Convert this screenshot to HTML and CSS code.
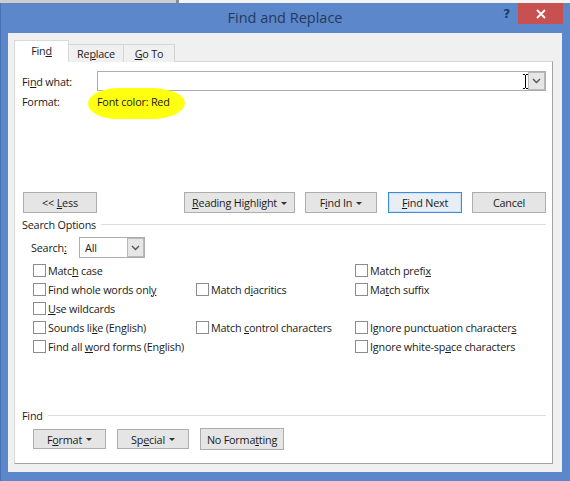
FILE: index.html
```html
<!DOCTYPE html>
<html>
<head>
<meta charset="utf-8">
<link rel="stylesheet" href="styles.css">
</head>
<body>
<div class="topstrip"><div class="ts-left"></div><div class="ts-mark"></div><div class="ts-right"></div></div>
<div class="window">
  <div class="titlebar">
    <div></div>
    <div class="title">Find and Replace</div>
    <div class="controls">
      <span class="help">?</span>
      <div class="close"><svg width="10" height="10" viewBox="0 0 10 10"><path d="M1 1 L9 9 M9 1 L1 9" stroke="#fff" stroke-width="1.8"/></svg></div>
    </div>
  </div>
  <div class="client">
    <div class="tabs">
      <div class="tab tab-active"><span>Fin<u>d</u></span></div>
      <div class="tab tab-replace"><span>Re<u>p</u>lace</span></div>
      <div class="tab tab-goto"><span><u>G</u>o To</span></div>
    </div>
    <div class="panel">
      <div class="row-find">
        <div class="lbl">Fi<u>n</u>d what:</div>
        <div class="combo">
          <div class="combo-text"><svg class="ibeam" width="5" height="15" viewBox="0 0 5 15"><path d="M0 0.5 H2 M3 0.5 H5 M2.5 1 V14 M0 14.5 H2 M3 14.5 H5" stroke="#000" stroke-width="1"/></svg></div>
          <div class="combo-btn"><svg width="9" height="6" viewBox="0 0 9 6"><path d="M1 1 L4.5 4.5 L8 1" fill="none" stroke="#555" stroke-width="1.4"/></svg></div>
        </div>
      </div>
      <div class="row-format">
        <div class="lbl">Format:</div>
        <div class="hl"><span class="hl-text">Font color: Red</span></div>
      </div>
      <div class="btn-row">
        <div class="btn btn-less"><span>&lt;&lt; <u>L</u>ess</span></div>
        <div class="btn btn-rh"><span><u>R</u>eading Highlight</span><span class="caret"></span></div>
        <div class="btn btn-findin"><span>F<u>i</u>nd In</span><span class="caret"></span></div>
        <div class="btn btn-next"><span><u>F</u>ind Next</span></div>
        <div class="btn btn-cancel"><span>Cancel</span></div>
      </div>
      <div class="group-head"><span>Search Options</span><div class="group-line"></div></div>
      <div class="search-row">
        <div class="search-lbl">Search<u>:</u></div>
        <div class="select">
          <div class="select-text">All</div>
          <div class="select-btn"><svg width="9" height="6" viewBox="0 0 9 6"><path d="M1 1 L4.5 4.5 L8 1" fill="none" stroke="#555" stroke-width="1.4"/></svg></div>
        </div>
      </div>
      <div class="checks">
        <label class="chk"><span class="box"></span><span>Matc<u>h</u> case</span></label>
        <div></div>
        <label class="chk"><span class="box"></span><span>Match prefi<u>x</u></span></label>

        <label class="chk"><span class="box"></span><span>Find whole words onl<u>y</u></span></label>
        <label class="chk"><span class="box"></span><span>Match d<u>i</u>acritics</span></label>
        <label class="chk"><span class="box"></span><span>Ma<u>t</u>ch suffix</span></label>

        <label class="chk"><span class="box"></span><span><u>U</u>se wildcards</span></label>
        <div></div>
        <div></div>

        <label class="chk"><span class="box"></span><span>Sounds li<u>k</u>e (English)</span></label>
        <label class="chk"><span class="box"></span><span>Match <u>c</u>ontrol characters</span></label>
        <label class="chk"><span class="box"></span><span>Ignore punctuation character<u>s</u></span></label>

        <label class="chk"><span class="box"></span><span>Find all <u>w</u>ord forms (English)</span></label>
        <div></div>
        <label class="chk"><span class="box"></span><span>Ignore white-sp<u>a</u>ce characters</span></label>
      </div>
      <div class="group-head group-find"><span>Find</span><div class="group-line"></div></div>
      <div class="bottom-row">
        <div class="btn btn-format"><span>F<u>o</u>rmat</span><span class="caret"></span></div>
        <div class="btn btn-special"><span>Sp<u>e</u>cial</span><span class="caret"></span></div>
        <div class="btn btn-noformat"><span>No Forma<u>t</u>ting</span></div>
      </div>
    </div>
  </div>
</div>
</body>
</html>
```
FILE: styles.css
```css
* { box-sizing: border-box; }
html, body { margin: 0; padding: 0; }
body {
  width: 570px;
  height: 481px;
  overflow: hidden;
  background: #5c87ca;
  font-family: "Segoe UI", "Open Sans", "Noto Sans", sans-serif;
  font-size: 10.8px;
  letter-spacing: -0.2px;
  color: #1a1a1a;
}
u { text-decoration: underline; text-underline-offset: 1px; }

.topstrip { display: flex; height: 3px; }
.ts-left { width: 176px; background: #cdcdcd; }
.ts-mark { width: 3px; background: #8a8a8a; }
.ts-right { flex: 1; background: #f4f4f4; }

.window {
  height: 478px;
  background: #5c87ca;
  border-left: 1px solid #4a73b6;
  display: flex;
  flex-direction: column;
}

.titlebar {
  height: 30px;
  display: grid;
  grid-template-columns: 1fr auto 1fr;
  align-items: start;
}
.title {
  font-size: 14.5px;
  letter-spacing: 0;
  color: #243a5a;
  line-height: 30px;
  margin-left: -1px;
}
.controls {
  display: flex;
  justify-content: flex-end;
  align-items: flex-start;
}
.help {
  font-family: "DejaVu Sans", sans-serif;
  font-weight: bold;
  font-size: 12px;
  color: #1f3a66;
  line-height: 22px;
  margin-right: 8px;
}
.close {
  width: 45px;
  height: 21px;
  margin-right: 7px;
  background: #c75050;
  display: flex;
  align-items: center;
  justify-content: center;
}

.client {
  margin: 0 8px 0 7px;
  height: 439px;
  background: #f0f0f0;
  padding: 8px 9px 8px 6px;
  display: flex;
  flex-direction: column;
}

.tabs {
  display: flex;
  align-items: flex-end;
  height: 21px;
  margin-bottom: -1px;
  position: relative;
  z-index: 1;
}
.tab {
  height: 18px;
  border: 1px solid #d4d4d4;
  border-bottom: none;
  background: #f0f0f0;
  display: flex;
  align-items: center;
  justify-content: center;
  line-height: 16px;
}
.tab-active {
  width: 55px;
  height: 22px;
  background: #fff;
  border-color: #d9d9d9;
  padding-top: 1px;
  padding-bottom: 3px;
}
.tab-replace { width: 55px; border-left: none; }
.tab-goto { width: 51px; border-left: none; }

.panel {
  flex: 1;
  background: #fff;
  border: 1px solid;
  border-color: #d9d9d9 #a3a3a3 #a3a3a3 #d9d9d9;
  padding: 9px 6px 0 7px;
  display: flex;
  flex-direction: column;
}

.row-find, .row-format {
  display: flex;
  align-items: center;
  height: 20px;
}
.lbl { width: 75px; }
.combo {
  flex: 1;
  height: 20px;
  border: 1px solid #abadb3;
  display: flex;
}
.combo-text {
  flex: 1;
  display: flex;
  justify-content: flex-end;
  align-items: center;
  padding-right: 0;
}
.combo-btn, .select-btn {
  width: 17px;
  background: #e6e6e6;
  border: 1px solid #b9b9b9;
  display: flex;
  align-items: center;
  justify-content: center;
}
.hl { position: relative; }
.hl::before {
  content: "";
  position: absolute;
  left: -9px;
  top: -6px;
  width: 97px;
  height: 31px;
  background: #ffff10;
  border-radius: 32% 36% 34% 30% / 50% 48% 52% 50%;
}
.hl-text { position: relative; }

.btn {
  height: 21px;
  background: #e5e5e5;
  border: 1px solid #adadad;
  display: flex;
  align-items: center;
  justify-content: center;
  white-space: nowrap;
}
.caret {
  display: inline-block;
  width: 0;
  height: 0;
  border-left: 3px solid transparent;
  border-right: 3px solid transparent;
  border-top: 3px solid #333;
  margin-left: 4px;
  margin-top: 1px;
}
.btn-row {
  display: flex;
  margin-top: 81px;
}
.btn-less { width: 74px; margin-left: 1px; }
.btn-rh { width: 111px; margin-left: auto; }
.btn-findin { width: 72px; margin-left: 10px; }
.btn-next {
  width: 74px;
  margin-left: 11px;
  border-color: #3c8bd6;
  background: #e8eef4;
  box-shadow: inset 0 0 0 1px #cde2f5;
}
.btn-cancel { width: 74px; margin-left: 10px; }

.group-head {
  display: flex;
  align-items: center;
  height: 22px;
}
.group-line {
  flex: 1;
  height: 1px;
  background: #dcdcdc;
  margin-left: 5px;
}
.group-find { margin-top: 48px; }

.search-row {
  display: flex;
  align-items: center;
  height: 21px;
  margin-top: 2px;
  padding-left: 9px;
}
.search-lbl { width: 48px; }
.select {
  width: 66px;
  height: 21px;
  border: 1px solid #abadb3;
  display: flex;
}
.select-text { flex: 1; padding-left: 5px; line-height: 19px; }

.checks {
  display: grid;
  grid-template-columns: 163px 159px 1fr;
  grid-auto-rows: 19px;
  margin-top: 3px;
  padding-left: 11px;
}
.chk {
  display: flex;
  align-items: center;
  white-space: nowrap;
}
.box {
  width: 13px;
  height: 13px;
  border: 1px solid #8c8c8c;
  background: #fff;
  margin-right: 2px;
  flex: none;
}

.bottom-row {
  display: flex;
  align-items: center;
  height: 22px;
  margin-top: 2px;
  padding-left: 11px;
}
.btn-format { width: 73px; height: 20px; }
.btn-special { width: 72px; height: 20px; margin-left: 11px; }
.btn-noformat { width: 84px; height: 22px; margin-left: 11px; }
```
